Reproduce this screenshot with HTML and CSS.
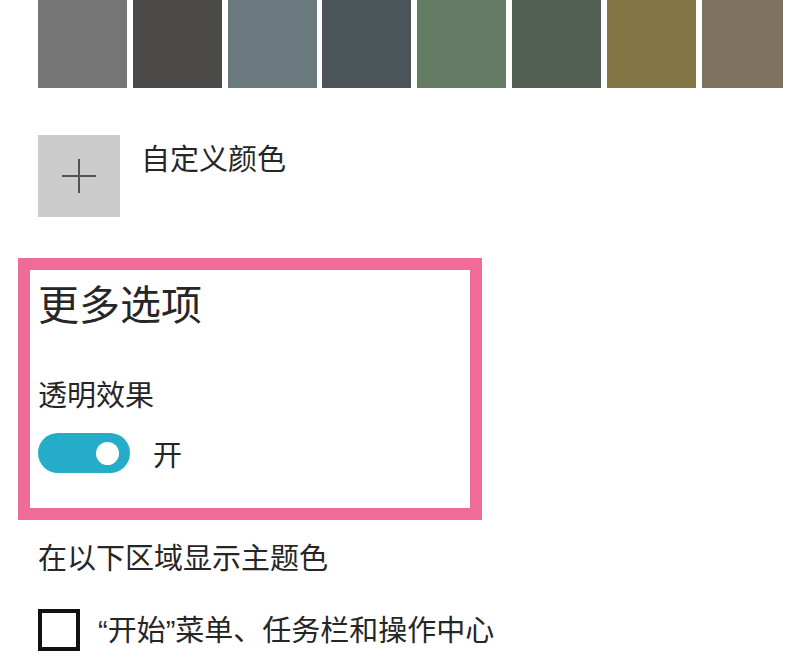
FILE: index.html
```html
<!DOCTYPE html>
<html lang="zh-CN">
<head>
<meta charset="utf-8">
<title>颜色</title>
<link rel="stylesheet" href="styles.css">
</head>
<body>
<div class="page">
  <div class="swatches">
    <div class="swatch c1"></div>
    <div class="swatch c2"></div>
    <div class="swatch c3"></div>
    <div class="swatch c4"></div>
    <div class="swatch c5"></div>
    <div class="swatch c6"></div>
    <div class="swatch c7"></div>
    <div class="swatch c8"></div>
  </div>

  <div class="custom">
    <div class="plus-btn">
      <svg width="40" height="40" viewBox="0 0 40 40"><path d="M20 3V37M3 20H37" stroke="#555" stroke-width="2" fill="none"/></svg>
    </div>
    <span class="custom-label">自定义颜色</span>
  </div>

  <div class="more">
    <h2 class="more-title">更多选项</h2>
    <div class="setting-label">透明效果</div>
    <div class="toggle-row">
      <div class="toggle"><div class="knob"></div></div>
      <span class="toggle-text">开</span>
    </div>
  </div>

  <div class="accent-label">在以下区域显示主题色</div>
  <div class="check-row">
    <div class="checkbox"></div>
    <span class="check-text"><span class="q">“</span>开始<span class="q">”</span>菜单、任务栏和操作中心</span>
  </div>
</div>
</body>
</html>
```

FILE: styles.css
```css
* { box-sizing: border-box; }
html, body {
  margin: 0;
  padding: 0;
  background: #ffffff;
}
body {
  font-family: "Noto Sans CJK SC", "Noto Sans", sans-serif;
  color: #262626;
  width: 800px;
  height: 666px;
  overflow: hidden;
}
.page {
  display: flex;
  flex-direction: column;
  padding-left: 38px;
}
.swatches {
  display: grid;
  grid-template-columns: repeat(7, 89px) 81px;
  column-gap: 5.8px;
  height: 88px;
}
.swatch { height: 88px; }
.c1 { background: #767676; }
.c2 { background: #4c4a48; }
.c3 { background: #69797e; }
.c4 { background: #4a5459; }
.c5 { background: #647c64; }
.c6 { background: #525e54; }
.c7 { background: #847545; }
.c8 { background: #7e735f; }

.custom {
  display: flex;
  align-items: flex-start;
  margin-top: 47px;
  gap: 21px;
}
.plus-btn {
  width: 82px;
  height: 82px;
  background: #cccccc;
  display: flex;
  align-items: center;
  justify-content: center;
}
.custom-label {
  font-size: 29px;
  line-height: 29px;
  margin-top: 8px;
}

.more {
  margin-top: 41px;
  margin-left: -20px;
  width: 464px;
  height: 262px;
  border: 12px solid #f06b97;
  padding: 12px 0 0 8px;
  display: flex;
  flex-direction: column;
}
.more-title {
  margin: 0;
  font-weight: normal;
  font-size: 41px;
  line-height: 41px;
  color: #262626;
}
.setting-label {
  margin-top: 56px;
  font-size: 29px;
  line-height: 29px;
}
.toggle-row {
  display: flex;
  align-items: center;
  margin-top: 25px;
  gap: 23px;
}
.toggle {
  width: 92px;
  height: 40px;
  border-radius: 20px;
  background: #25acc9;
  position: relative;
}
.knob {
  position: absolute;
  right: 11px;
  top: 8.5px;
  width: 23px;
  height: 23px;
  border-radius: 50%;
  background: #ffffff;
}
.toggle-text {
  font-size: 29px;
  line-height: 29px;
}

.accent-label {
  margin-top: 22px;
  font-size: 29px;
  line-height: 29px;
}
.check-row {
  display: flex;
  align-items: center;
  margin-top: 38px;
  gap: 18px;
}
.checkbox {
  width: 42px;
  height: 42px;
  border: 4px solid #111111;
}
.check-text {
  font-size: 29px;
  line-height: 29px;
}
.q {
  font-family: "Liberation Sans", sans-serif;
}
```
